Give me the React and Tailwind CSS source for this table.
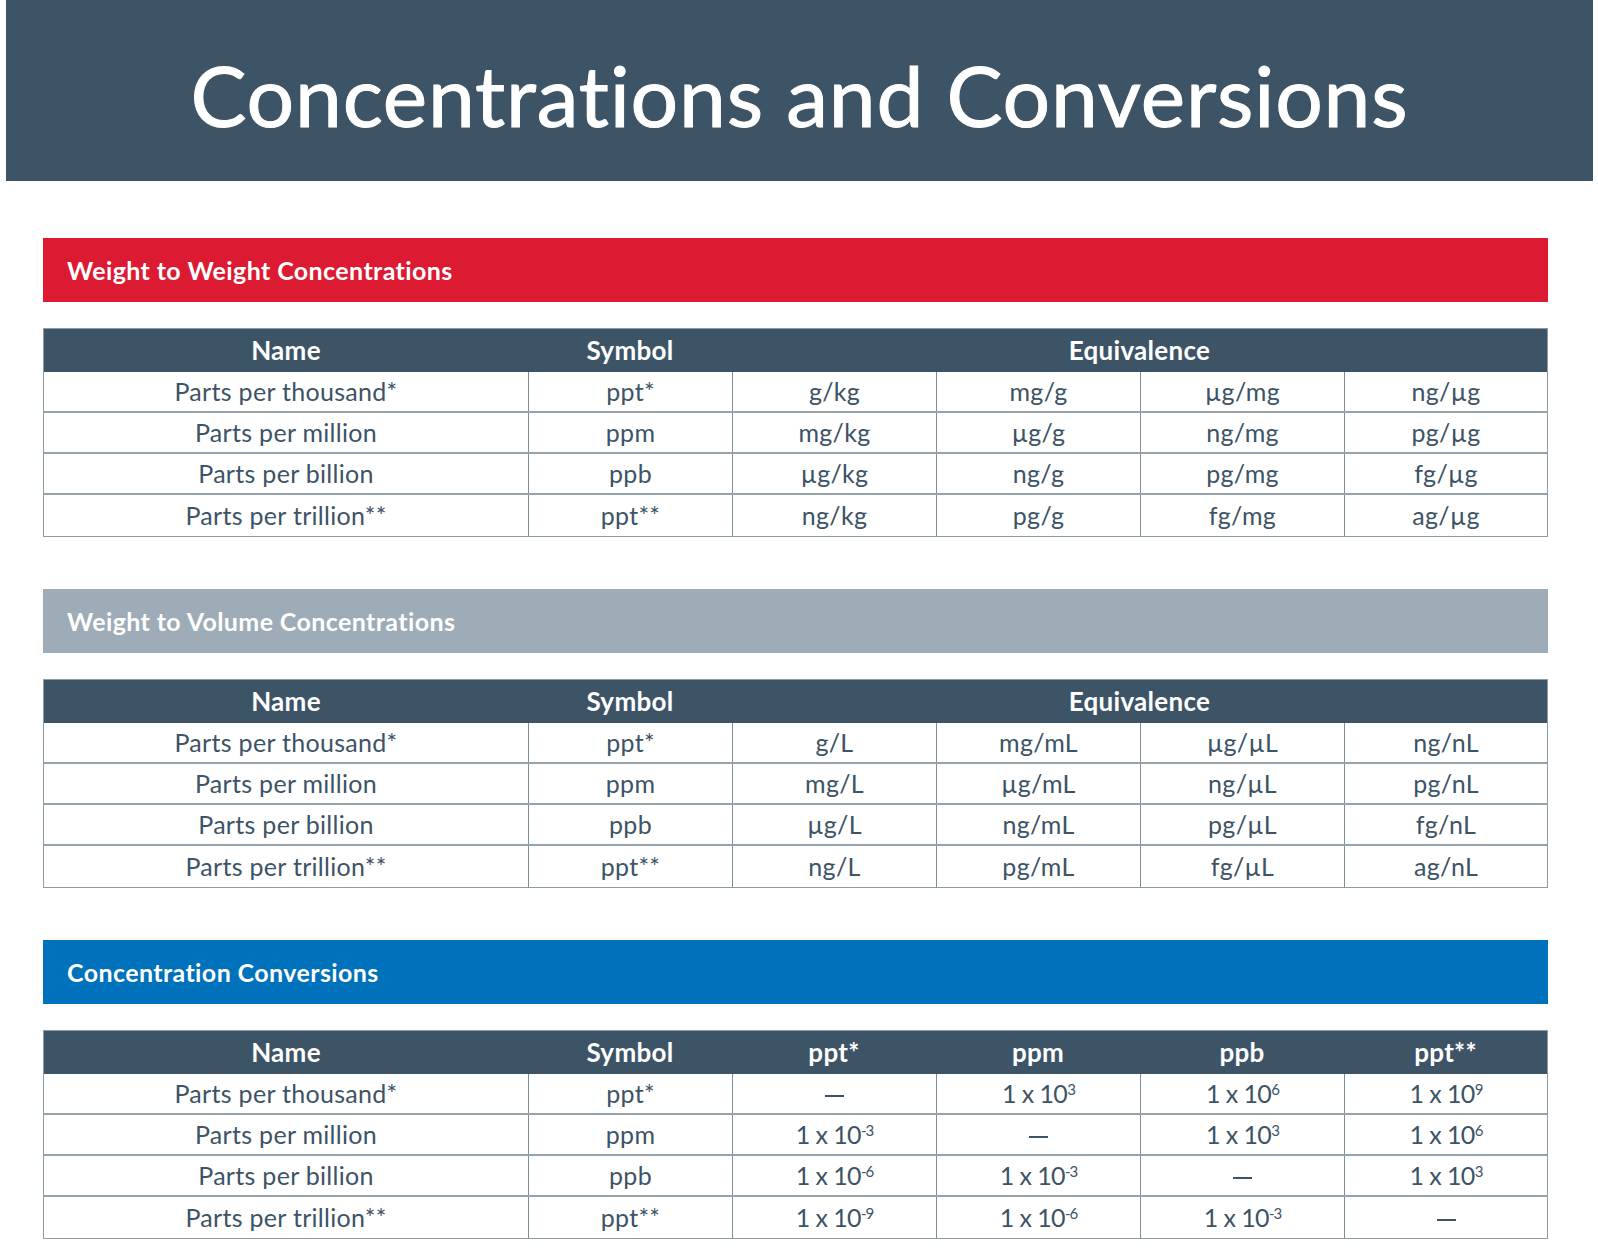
const font = { fontFamily: 'Lato, "Open Sans", sans-serif' };

const weightRows = [
  ['Parts per thousand*', 'ppt*', 'g/kg', 'mg/g', 'µg/mg', 'ng/µg'],
  ['Parts per million', 'ppm', 'mg/kg', 'µg/g', 'ng/mg', 'pg/µg'],
  ['Parts per billion', 'ppb', 'µg/kg', 'ng/g', 'pg/mg', 'fg/µg'],
  ['Parts per trillion**', 'ppt**', 'ng/kg', 'pg/g', 'fg/mg', 'ag/µg'],
];

const volumeRows = [
  ['Parts per thousand*', 'ppt*', 'g/L', 'mg/mL', 'µg/µL', 'ng/nL'],
  ['Parts per million', 'ppm', 'mg/L', 'µg/mL', 'ng/µL', 'pg/nL'],
  ['Parts per billion', 'ppb', 'µg/L', 'ng/mL', 'pg/µL', 'fg/nL'],
  ['Parts per trillion**', 'ppt**', 'ng/L', 'pg/mL', 'fg/µL', 'ag/nL'],
];

// exponent values: null = dash
const convRows = [
  ['Parts per thousand*', 'ppt*', null, '3', '6', '9'],
  ['Parts per million', 'ppm', '-3', null, '3', '6'],
  ['Parts per billion', 'ppb', '-6', '-3', null, '3'],
  ['Parts per trillion**', 'ppt**', '-9', '-6', '-3', null],
];

function Power({ exp }) {
  if (exp === null) return <span className="inline-block w-[19px] h-[2px] bg-[#3d5366] mt-[4px]" />;
  return (
    <span className="tracking-[-0.6px]">
      1 x 10<sup className="text-[15px] tracking-[-1px]">{exp}</sup>
    </span>
  );
}

function SectionBar({ title, color }) {
  return (
    <div className={`h-[64px] flex items-center pl-[24px] ${color}`}>
      <h2 className="text-white font-bold text-[25px] tracking-[0.4px] pt-[2px]">{title}</h2>
    </div>
  );
}

function Table({ header, rows, renderCell }) {
  return (
    <div className="mt-[26px] border border-[#8d9ba7]">
      <div className="h-[43px] bg-[#3d5366] text-white font-bold text-[26px] tracking-[0.3px] grid grid-cols-[484px_204px_204px_204px_204px_203px] items-center text-center">
        {header}
      </div>
      {rows.map((row, i) => (
        <div
          key={i}
          className={`h-[41px] grid grid-cols-[484px_204px_204px_204px_204px_203px] text-[25px] tracking-[0.3px] text-[#3d5366] ${i < rows.length - 1 ? 'border-b-2 border-[#95a3ae]' : ''}`}
        >
          {row.map((cell, j) => (
            <div key={j} className={`flex items-center justify-center ${j > 0 ? 'border-l border-[#7f8e9b]' : ''}`}>
              {renderCell ? renderCell(cell, j) : cell}
            </div>
          ))}
        </div>
      ))}
    </div>
  );
}

export default function App() {
  const eqHeader = (
    <>
      <div>Name</div>
      <div>Symbol</div>
      <div className="col-span-4">Equivalence</div>
    </>
  );
  const convHeader = (
    <>
      <div>Name</div>
      <div>Symbol</div>
      <div>ppt*</div>
      <div>ppm</div>
      <div>ppb</div>
      <div>ppt**</div>
    </>
  );

  return (
    <div className="w-[1598px] min-h-[1248px] bg-white pb-[10px]" style={font}>
      <header className="ml-[6px] w-[1587px] h-[181px] bg-[#3d5366] flex items-center justify-center pt-[8px]">
        <h1 className="text-white text-[84px] font-normal tracking-[0.8px] [-webkit-text-stroke:1px_white]">Concentrations and Conversions</h1>
      </header>

      <main className="px-[43px] w-[1591px]">
        <section className="mt-[57px]">
          <SectionBar title="Weight to Weight Concentrations" color="bg-[#dc1a32]" />
          <Table header={eqHeader} rows={weightRows} />
        </section>

        <section className="mt-[52px]">
          <SectionBar title="Weight to Volume Concentrations" color="bg-[#9dacb6]" />
          <Table header={eqHeader} rows={volumeRows} />
        </section>

        <section className="mt-[52px]">
          <SectionBar title="Concentration Conversions" color="bg-[#0071bb]" />
          <Table
            header={convHeader}
            rows={convRows}
            renderCell={(cell, j) => (j < 2 ? cell : <Power exp={cell} />)}
          />
        </section>
      </main>
    </div>
  );
}
